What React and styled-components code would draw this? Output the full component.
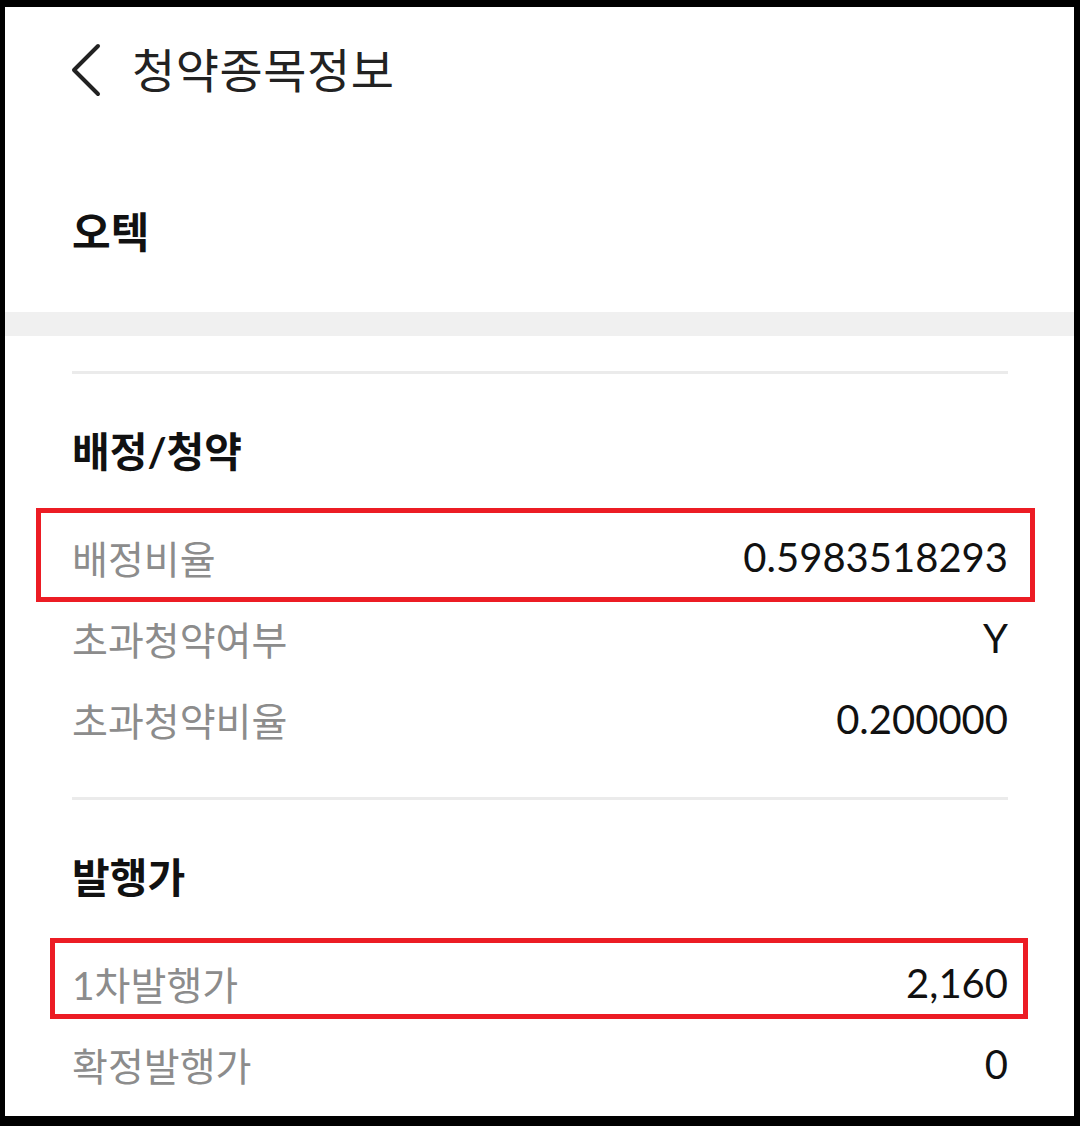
import React from "react";
import styled, { createGlobalStyle } from "styled-components";

const GlobalStyle = createGlobalStyle`
  html, body {
    margin: 0;
    padding: 0;
    background: #000;
  }
  body {
    font-family: Lato, "Noto Sans CJK KR", sans-serif;
  }
`;

// Outer frame of the screenshot
const Frame = styled.div`
  width: 1080px;
  height: 1126px;
  box-sizing: border-box;
  border-style: solid;
  border-color: #000;
  border-width: 7px 6px 10px 5px;
  background: #fff;
  overflow: hidden;
`;

const Header = styled.header`
  height: 126px;
  display: flex;
  align-items: center;
  padding-left: 61px;
  gap: 26px;
`;

const BackButton = styled.button`
  border: 0;
  background: none;
  padding: 0;
  width: 40px;
  height: 54px;
  display: flex;
  align-items: center;
  justify-content: center;
  cursor: pointer;
`;

const Title = styled.h1`
  margin: 0;
  font-size: 47px;
  font-weight: 400;
  color: #222;
  line-height: 54px;
  letter-spacing: 0.5px;
`;

const StockName = styled.div`
  height: 179px;
  box-sizing: border-box;
  padding: 73px 0 0 67px;
  font-size: 42px;
  font-weight: 700;
  line-height: 52px;
  color: #111;
`;

const Band = styled.div`
  height: 24px;
  background: #f0f0f0;
`;

const Content = styled.div`
  padding: 0 66px 0 67px;
`;

const Divider = styled.div`
  height: 3px;
  background: #ebebeb;
  margin-top: ${(p) => p.$top}px;
`;

const SectionTitle = styled.h2`
  margin: 52px 0 38px;
  font-size: 41px;
  font-weight: 700;
  line-height: 52px;
  color: #111;
`;

const Row = styled.div`
  position: relative;
  height: 81px;
  display: flex;
  align-items: center;
  justify-content: space-between;
`;

const Mark = styled.span`
  position: absolute;
  left: ${(p) => -p.$l}px;
  right: ${(p) => -p.$r}px;
  top: ${(p) => -p.$t}px;
  bottom: ${(p) => -p.$b}px;
  border: 5px solid #ec1c24;
  pointer-events: none;
`;

const Label = styled.span`
  font-size: 39px;
  color: #8c8c8c;
`;

const Value = styled.span`
  font-size: 40px;
  color: #111;
`;

const Chevron = () => (
  <svg width="32" height="54" viewBox="0 0 32 54" fill="none">
    <path
      d="M28 3 L4 27 L28 51"
      stroke="#222"
      strokeWidth="4"
      strokeLinecap="round"
      strokeLinejoin="round"
    />
  </svg>
);

const sections = [
  {
    title: "배정/청약",
    rows: [
      { label: "배정비율", value: "0.5983518293", mark: { l: 36, r: 27, t: 8, b: 5 } },
      { label: "초과청약여부", value: "Y" },
      { label: "초과청약비율", value: "0.200000" },
    ],
  },
  {
    title: "발행가",
    rows: [
      { label: "1차발행가", value: "2,160", mark: { l: 22, r: 20, t: 4, b: -4 } },
      { label: "확정발행가", value: "0" },
    ],
  },
];

function App() {
  return (
    <>
      <GlobalStyle />
      <Frame>
        <Header>
          <BackButton aria-label="뒤로">
            <Chevron />
          </BackButton>
          <Title>청약종목정보</Title>
        </Header>
        <StockName>오텍</StockName>
        <Band />
        <Content>
          {sections.map((s, i) => (
            <section key={i}>
              <Divider $top={i === 0 ? 35 : 38} />
              <SectionTitle>{s.title}</SectionTitle>
              {s.rows.map((r, j) => (
                <Row key={j}>
                  {r.mark && <Mark $l={r.mark.l} $r={r.mark.r} $t={r.mark.t} $b={r.mark.b} />}
                  <Label>{r.label}</Label>
                  <Value>{r.value}</Value>
                </Row>
              ))}
            </section>
          ))}
        </Content>
      </Frame>
    </>
  );
}

export default App;
